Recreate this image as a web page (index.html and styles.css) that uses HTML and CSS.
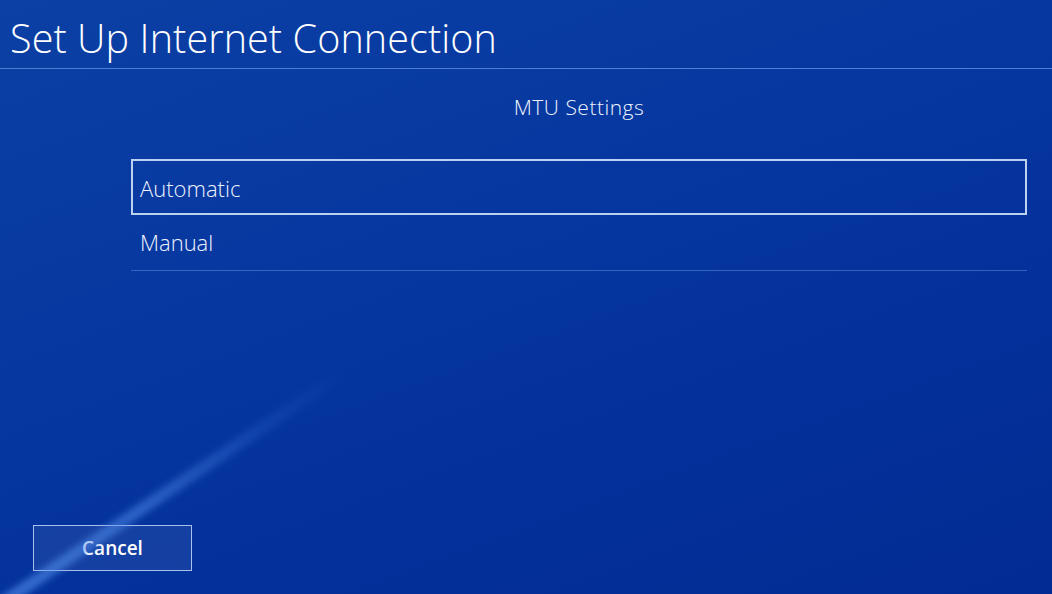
FILE: index.html
```html
<!DOCTYPE html>
<html lang="en">

<head>
    <meta charset="UTF-8">
    <meta name="viewport" content="width=device-width, initial-scale=1.0">
    <title>Set Up Internet Connection</title>
    <link rel="stylesheet" href="styles.css">
</head>

<body>
    <!-- 背景光线 -->
    <div class="streak"></div>

    <div class="header">
        <h1 class="title">Set Up Internet Connection</h1>
    </div>

    <div class="content">
        <p class="subtitle">MTU Settings</p>
        <ul class="options">
            <li class="active">Automatic</li>
            <li>Manual</li>
        </ul>
    </div>

    <div class="footer">
        <button class="btn">Cancel</button>
    </div>
</body>

</html>
```

FILE: styles.css
```css
* {
    margin: 0;
    padding: 0;
    box-sizing: border-box;
    list-style: none;
}

html,
body {
    width: 100%;
    height: 100%;
}

body {
    position: relative;
    overflow: hidden;
    display: flex;
    flex-direction: column;
    font-family: "Open Sans", "Liberation Sans", sans-serif;
    color: #fff;
    background: linear-gradient(160deg, #0c40a4 0%, #0637a0 40%, #03309a 70%, #022c92 100%);
}

.streak {
    position: absolute;
    left: -20px;
    top: 612px;
    width: 440px;
    height: 12px;
    transform: rotate(-34deg);
    transform-origin: left center;
    background: linear-gradient(90deg, rgba(90, 150, 240, 0.6) 0%, rgba(80, 140, 235, 0.5) 45%, rgba(70, 130, 230, 0.2) 75%, rgba(70, 130, 230, 0) 100%);
    filter: blur(3px);
    pointer-events: none;
}

.header {
    height: 69px;
    padding: 14px 0 0 10px;
    border-bottom: solid 1px #4d7fd2;
}

.title {
    font-size: 39.5px;
    font-weight: 300;
    line-height: 48px;
    letter-spacing: 0.1px;
}

.content {
    margin-left: 131px;
    width: 896px;
}

.subtitle {
    margin-top: 23px;
    height: 30px;
    line-height: 30px;
    text-align: center;
    font-size: 21px;
    font-weight: 300;
    letter-spacing: 0.5px;
    color: #eef3fd;
}

.options {
    margin-top: 37px;
}

.options li {
    height: 56px;
    line-height: 54px;
    padding-left: 9px;
    font-size: 22px;
    font-weight: 300;
    color: #eef3fd;
    border-bottom: solid 1px rgba(110, 160, 235, 0.45);
}

.options li.active {
    border: solid 2px #bcd0f2;
    padding-left: 7px;
}

.footer {
    margin-top: auto;
    padding: 0 0 23px 33px;
}

.btn {
    width: 159px;
    height: 46px;
    border: solid 1px #a9c0ec;
    background: rgba(255, 255, 255, 0.07);
    color: #fff;
    font-family: "Open Sans", "Liberation Sans", sans-serif;
    font-size: 19px;
    font-weight: 600;
}
```
